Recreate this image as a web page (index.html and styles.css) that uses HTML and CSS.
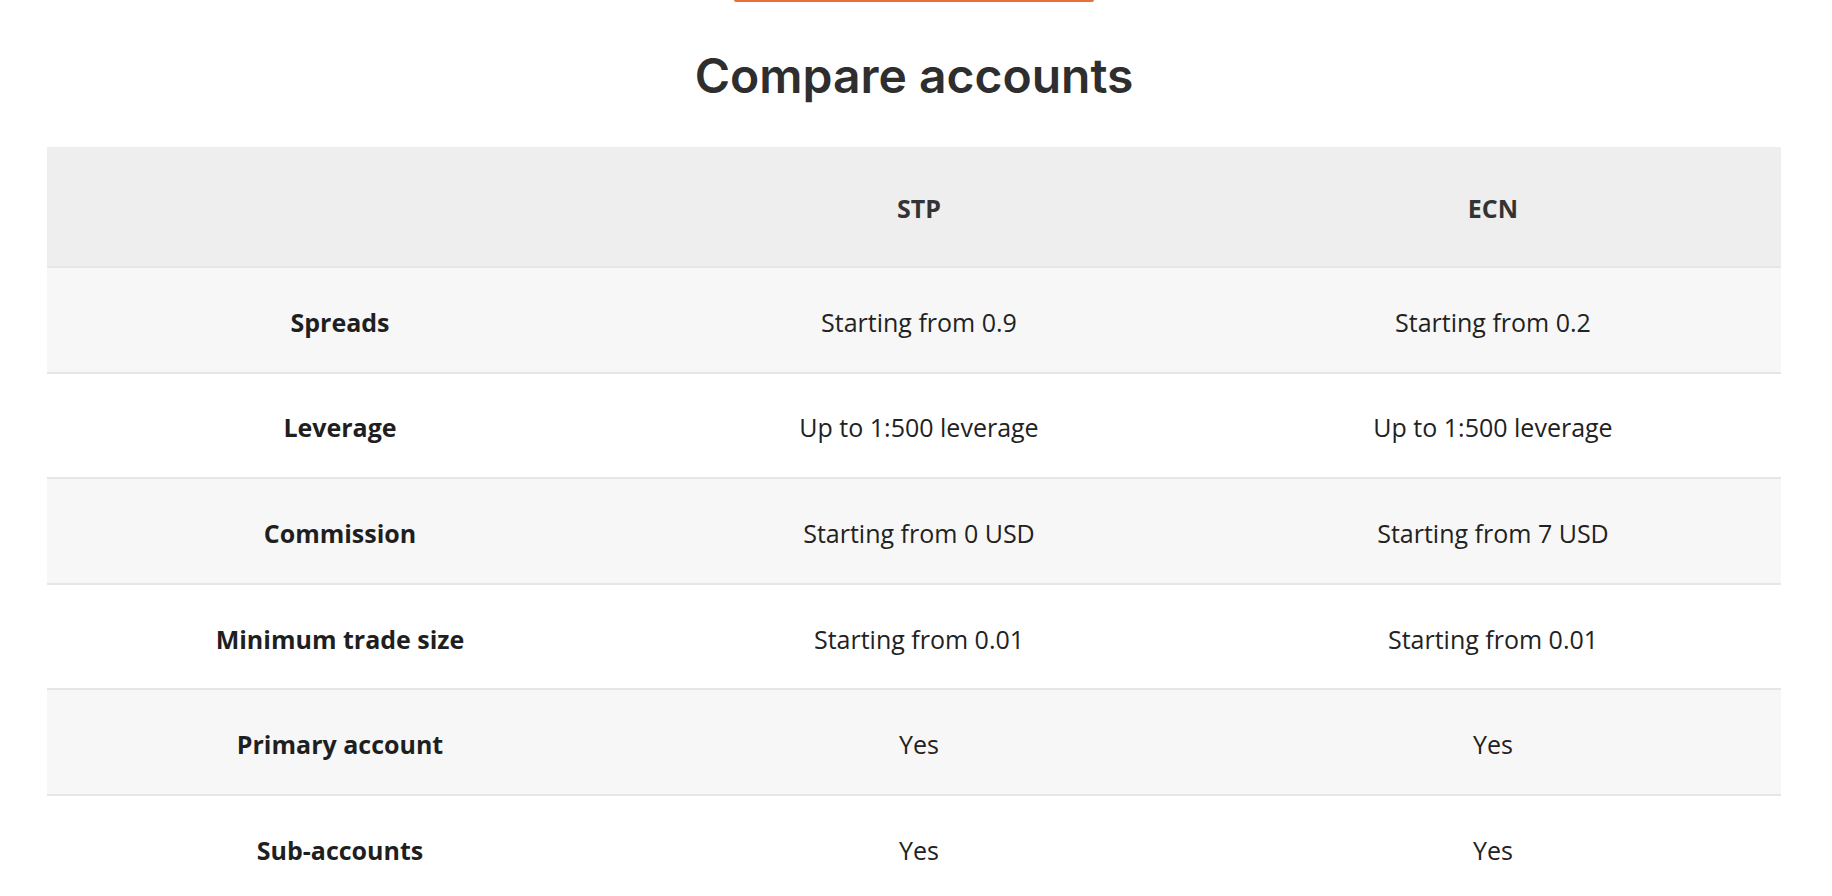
FILE: index.html
```html
<!DOCTYPE html>
<html lang="en">
<head>
<meta charset="utf-8">
<title>Compare accounts</title>
<link rel="stylesheet" href="styles.css">
</head>
<body>
<div class="page">
  <div class="cta-edge"></div>
  <h2 class="title">Compare accounts</h2>
  <table class="compare">
    <colgroup>
      <col class="col-label">
      <col class="col-stp">
      <col class="col-ecn">
    </colgroup>
    <thead>
      <tr>
        <th></th>
        <th>STP</th>
        <th>ECN</th>
      </tr>
    </thead>
    <tbody>
      <tr><th>Spreads</th><td>Starting from 0.9</td><td>Starting from 0.2</td></tr>
      <tr><th>Leverage</th><td>Up to 1:500 leverage</td><td>Up to 1:500 leverage</td></tr>
      <tr><th>Commission</th><td>Starting from 0 USD</td><td>Starting from 7 USD</td></tr>
      <tr><th>Minimum trade size</th><td>Starting from 0.01</td><td>Starting from 0.01</td></tr>
      <tr><th>Primary account</th><td>Yes</td><td>Yes</td></tr>
      <tr><th>Sub-accounts</th><td>Yes</td><td>Yes</td></tr>
    </tbody>
  </table>
</div>
</body>
</html>
```

FILE: styles.css
```css
html, body {
  margin: 0;
  padding: 0;
  background: #ffffff;
}

.page {
  width: 1734px;
  margin-left: 47px;
  display: flex;
  flex-direction: column;
  align-items: center;
}

.cta-edge {
  width: 360px;
  height: 2px;
  background: #e8703a;
  border-radius: 0 0 6px 6px;
}

.title {
  margin: 46px 0 0 0;
  height: 99px;
  font-family: "Inter", "Roboto", sans-serif;
  font-weight: 600;
  font-size: 48px;
  line-height: 56px;
  color: #2e2e2e;
  letter-spacing: 0;
}

.compare {
  width: 100%;
  border-collapse: collapse;
  table-layout: fixed;
  font-family: "Open Sans", "Noto Sans", sans-serif;
  font-size: 25px;
  color: #222222;
}

.col-label { width: 586px; }
.col-stp { width: 572px; }
.col-ecn { width: 576px; }

.compare th,
.compare td {
  text-align: center;
  vertical-align: middle;
  padding: 2px 0 0 0;
}

.compare thead tr {
  background: #eeeeee;
  height: 120px;
}

.compare thead th {
  font-weight: 700;
  color: #333333;
}

.compare tbody tr {
  height: 105.6px;
  border-top: 2px solid #e6e6e6;
}

.compare tbody th,
.compare tbody td {
  padding-top: 4px;
}

.compare tbody tr:nth-child(odd) {
  background: #f7f7f7;
}

.compare tbody th {
  font-weight: 700;
  color: #1f1f1f;
}

.compare tbody td {
  font-weight: 400;
}
```
